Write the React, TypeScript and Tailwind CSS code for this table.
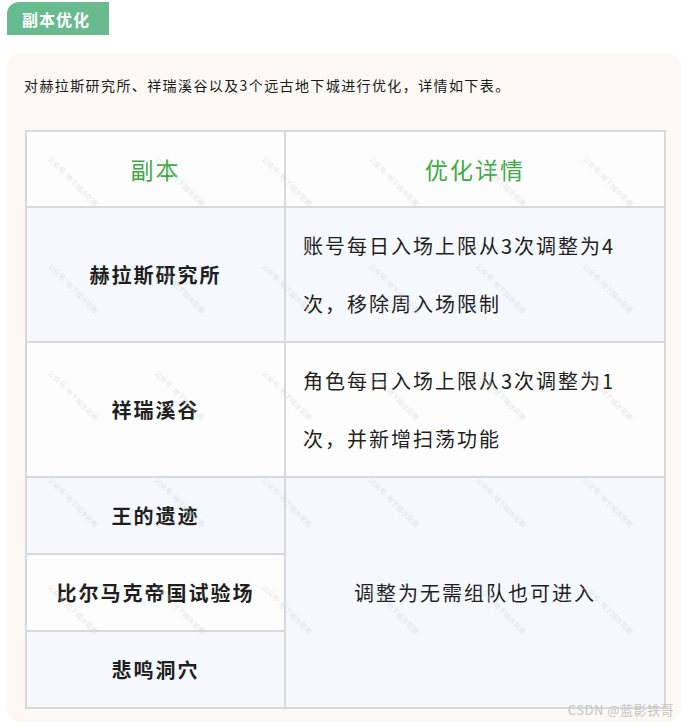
import React from "react";

const cjk = { fontFamily: '"Noto Sans CJK SC", "Noto Sans", sans-serif' };

type Row = { name: string; h: string; tint: boolean };

const rows: Row[] = [
  { name: "王的遗迹", h: "h-[77px]", tint: true },
  { name: "比尔马克帝国试验场", h: "h-[77px]", tint: false },
  { name: "悲鸣洞穴", h: "h-[77px]", tint: true },
];

// faint diagonal watermark from the source image
function Watermarks() {
  const xs = [28, 135, 242, 349, 456, 563];
  const ys = [24, 131, 238, 345, 452];
  return (
    <div className="pointer-events-none absolute inset-0 overflow-hidden" aria-hidden>
      {ys.map((y) =>
        xs.map((x) => (
          <span
            key={`${x}-${y}`}
            className="absolute origin-top-left rotate-45 whitespace-nowrap text-[7px] text-[#d2d2d2]/60"
            style={{ left: x, top: y }}
          >
            公众号: 地下城冰花雨
          </span>
        ))
      )}
    </div>
  );
}

export default function App() {
  return (
    <div className="min-h-[726px] w-[681px] bg-white" style={cjk}>
      <div className="pl-[7px] pt-[2px]">
        <div className="flex h-[33px] w-[102px] items-center rounded-tl-[12px] bg-[#67bb8f] pl-[15px] text-[16px] font-bold tracking-[1px] text-white">
          副本优化
        </div>
      </div>

      <div className="relative ml-[7px] mt-[18px] h-[669px] rounded-[14px] bg-[#fcf9f4] pt-[22px]">
        <p className="pl-[17px] text-[14px] tracking-[1.4px] text-[#1a1a1a]">
          对赫拉斯研究所、祥瑞溪谷以及3个远古地下城进行优化，详情如下表。
        </p>

        <div className="relative ml-[18px] mt-[34px] w-[641px]">
          <table className="w-full table-fixed border-collapse border-2 border-[#d9d9d9]">
            <colgroup>
              <col className="w-[259px]" />
              <col />
            </colgroup>
            <thead>
              <tr className="h-[76px] bg-[#fdfdfd]">
                <th className="border-2 border-[#d9d9d9] text-center text-[23px] font-normal tracking-[2px] text-[#3caa47]">
                  副本
                </th>
                <th className="border-2 border-[#d9d9d9] text-center text-[23px] font-normal tracking-[2px] text-[#3caa47]">
                  优化详情
                </th>
              </tr>
            </thead>
            <tbody className="text-[20px] tracking-[2px] text-[#1f1f1f]">
              <tr className="h-[135px] bg-[#f5f9fd]">
                <td className="border-2 border-[#d9d9d9] text-center font-bold">赫拉斯研究所</td>
                <td className="border-2 border-[#d9d9d9] pl-[17px] pr-[30px] leading-[58px]">
                  账号每日入场上限从3次调整为4次，移除周入场限制
                </td>
              </tr>
              <tr className="h-[135px] bg-[#fdfdfd]">
                <td className="border-2 border-[#d9d9d9] text-center font-bold">祥瑞溪谷</td>
                <td className="border-2 border-[#d9d9d9] pl-[17px] pr-[30px] leading-[58px]">
                  角色每日入场上限从3次调整为1次，并新增扫荡功能
                </td>
              </tr>
              {rows.map((r, i) => (
                <tr key={r.name} className={`${r.h} ${r.tint ? "bg-[#f5f9fd]" : "bg-[#fdfdfd]"}`}>
                  <td className="border-2 border-[#d9d9d9] text-center font-bold">{r.name}</td>
                  {i === 0 ? (
                    <td rowSpan={3} className="border-2 border-[#d9d9d9] bg-[#f5f9fd] text-center">
                      调整为无需组队也可进入
                    </td>
                  ) : null}
                </tr>
              ))}
            </tbody>
          </table>
          <Watermarks />
        </div>

        <div className="absolute bottom-[3px] right-[7px] text-[13px] tracking-[0.5px] text-[#c4c4c4]">
          CSDN @蓝影铁哥
        </div>
      </div>
    </div>
  );
}
